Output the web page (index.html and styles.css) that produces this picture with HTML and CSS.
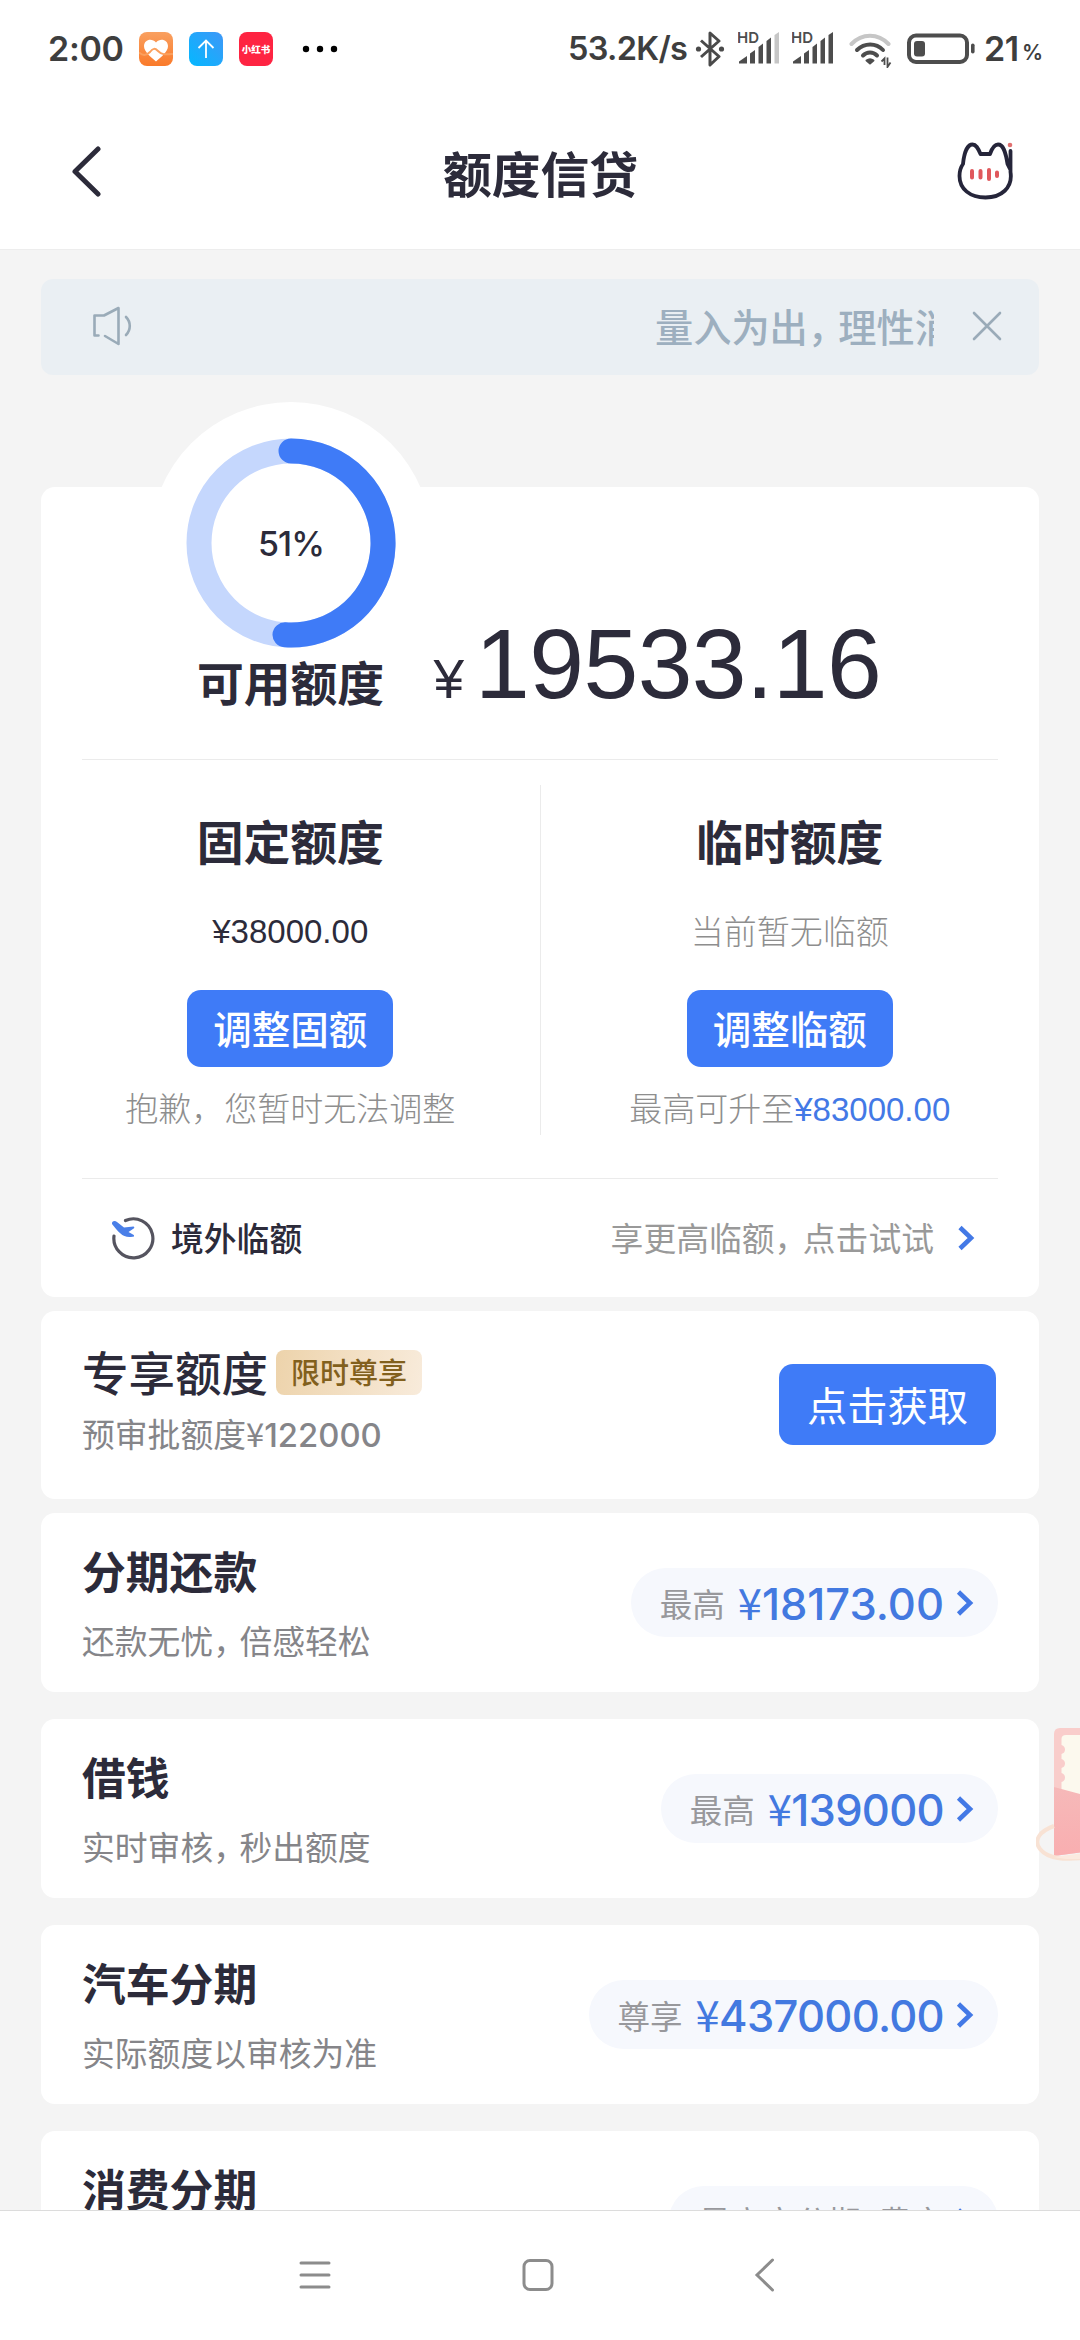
FILE: index.html
```html
<!DOCTYPE html>
<html lang="zh-CN">
<head>
<meta charset="utf-8">
<title>额度信贷</title>
<link rel="stylesheet" href="styles.css">
</head>
<body>
<div class="status">
  <span class="clock">2:00</span>
  <svg class="app" viewBox="0 0 34 34"><defs><linearGradient id="og" x1="0" y1="0" x2="0" y2="1"><stop offset="0" stop-color="#f9a060"/><stop offset="1" stop-color="#fa7a2a"/></linearGradient><linearGradient id="bg" x1="1" y1="0" x2="0" y2="1"><stop offset="0" stop-color="#3f97f7"/><stop offset="1" stop-color="#04b8ff"/></linearGradient></defs><rect width="34" height="34" rx="8" fill="url(#og)"/><path d="M17 29.500C12 25 5 20 5 14C5 7.500 13 5.500 17 10.500C21 5.500 29 7.500 29 14C29 20 22 25 17 29.500Z" fill="#fff"/><path d="M0 20.500C4 24 7 24 11 20C14 16 16 16 19 19C23 23 26 22.500 34 22" fill="none" stroke="#fba05e" stroke-width="2"/></svg>
  <svg class="app" viewBox="0 0 34 34"><rect width="34" height="34" rx="8" fill="url(#bg)"/><path d="M17 26V8.500M9.500 16L17 8.500L24.500 16" fill="none" stroke="#fff" stroke-width="1.800"/></svg>
  <span class="app app-red">小红书</span>
  <svg class="dots" width="36" height="8" viewBox="0 0 36 8"><circle cx="4" cy="4" r="3.200"/><circle cx="18" cy="4" r="3.200"/><circle cx="32" cy="4" r="3.200"/></svg>
  <span class="speed">53.2K/s</span>
  <svg class="bt" width="30" height="36" viewBox="0 0 30 36"><path d="M6 9.500L24 25.500L15 34V2L24 10L6 26" fill="none" stroke="#4a4a4a" stroke-width="3" stroke-linejoin="round"/><circle cx="3.500" cy="18" r="2.600" fill="#4a4a4a"/><circle cx="26.500" cy="18" r="2.600" fill="#4a4a4a"/></svg>
  <svg class="sig" width="42" height="36" viewBox="0 -2 42 36"><text x="-1" y="11" class="hd">HD</text><g fill="#4d4d4d"><path d="M1 31.500V29.500L9 24V31.500Z"/><path d="M12 31.500V21.500L17 18V31.500Z"/><path d="M20.500 31.500V15L25 11.500V31.500Z"/><path d="M28.500 31.500V9L33 5.500V31.500Z"/><path d="M36.500 31.500V3L41 0V31.500Z" fill="#c6c6c6"/></g></svg>
  <svg class="sig" width="42" height="36" viewBox="0 -2 42 36"><text x="-1" y="11" class="hd">HD</text><g fill="#4d4d4d"><path d="M1 31.500V29.500L9 24V31.500Z"/><path d="M12 31.500V21.500L17 18V31.500Z"/><path d="M20.500 31.500V15L25 11.500V31.500Z"/><path d="M28.500 31.500V9L33 5.500V31.500Z"/><path d="M36.500 31.500V3L41 0V31.500Z"/></g></svg>
  <svg class="wifi" width="44" height="36" viewBox="0 0 44 36"><g fill="none" stroke-width="4" stroke-linecap="round"><path d="M2.500 12C13 1 29 1 39.500 12" stroke="#c6c6c6"/><path d="M8 18C15.500 10.500 27 10.500 34 18" stroke="#4d4d4d"/><path d="M14 23.500C18 19.500 24 19.500 28 23.500" stroke="#4d4d4d"/></g><path d="M17.500 28.500C19.500 27 22.500 27 24.500 28.500L21 31.500Z" fill="#4d4d4d" stroke="#4d4d4d" stroke-width="2" stroke-linejoin="round"/><path d="M32.500 29.500L35.500 26.500V33M38.500 25.500V35L41.500 30.500" fill="none" stroke="#4d4d4d" stroke-width="1.800"/></svg>
  <svg class="batt" width="70" height="32" viewBox="0 0 70 32"><rect x="2" y="2.500" width="58" height="26.500" rx="7" fill="none" stroke="#4d4d4d" stroke-width="4"/><rect x="7" y="8" width="11" height="15.500" rx="3" fill="#4d4d4d"/><rect x="64" y="10.500" width="3.600" height="10" rx="1.800" fill="#4d4d4d"/></svg>
  <span class="level">21</span><span class="pct">%</span>
</div>

<header class="header">
  <svg class="back" width="30" height="52" viewBox="0 0 30 52"><path d="M26 4L3 26.500L26 49" fill="none" stroke="#2c2b3a" stroke-width="5" stroke-linecap="round" stroke-linejoin="round"/></svg>
  <h1>额度信贷</h1>
  <svg class="cat" width="58" height="60" viewBox="0 0 58 60"><path d="M54.500 10V31C57 47 45 56.500 29.500 56.500C14 56.500 3.500 48 3.500 35C3.500 29 4.500 26.500 7 23C8 13 11 3.500 16.500 3.500C20 3.500 22 7 24.500 13H34C36.500 6 38.500 3.500 42 3.500C47 3.500 49.500 10 51.500 23L54 28" fill="none" stroke="#25253a" stroke-width="3.800" stroke-linejoin="round" stroke-linecap="round"/><g stroke="#e0585c" stroke-width="4" stroke-linecap="round"><path d="M16 30V36.500M24.500 30V36.500M33 29V38M41 31.500V35"/></g><circle cx="54" cy="4" r="2.300" fill="#e07070"/></svg>
</header>

<main class="main">
  <div class="notice">
    <svg class="horn" width="42" height="42" viewBox="0 0 42 42"><path d="M7.500 30.500H3.500V10.500H13L27.500 3V39L14 31M35 12C40 17 40 25 35 30" fill="none" stroke="#9aabb8" stroke-width="2.600" stroke-linejoin="round" stroke-linecap="round"/></svg>
    <div class="ticker">量入为出<i class="c">，</i>理性消费</div>
    <svg class="close" width="30" height="30" viewBox="0 0 30 30"><path d="M2 2L28 28M28 2L2 28" stroke="#9aabb8" stroke-width="2.600" stroke-linecap="round"/></svg>
  </div>

  <section class="card quota">
    <div class="total">
      <div class="gauge">
        <svg width="282" height="282" viewBox="-141 -141 282 282"><circle r="141" fill="#fff"/><circle r="92" fill="none" stroke="#c5d7fd" stroke-width="25"/><path d="M0 -92A92 92 0 1 1 -6 91.800" fill="none" stroke="#3f7bf7" stroke-width="25" stroke-linecap="round"/><text class="ratio" y="12.500" text-anchor="middle">51%</text></svg>
        <h2>可用额度</h2>
      </div>
      <div class="amount"><small>¥</small><b>19533.16</b></div>
    </div>
    <hr>
    <div class="split">
      <div class="half">
        <h2>固定额度</h2>
        <p class="val">¥38000.00</p>
        <a class="btn">调整固额</a>
        <p class="hint">抱歉，您暂时无法调整</p>
      </div>
      <div class="half">
        <h2>临时额度</h2>
        <p class="hint val-none">当前暂无临额</p>
        <a class="btn">调整临额</a>
        <p class="hint">最高可升至<em>¥83000.00</em></p>
      </div>
    </div>
    <hr>
    <div class="abroad">
      <svg class="plane" width="46" height="46" viewBox="0 0 46 46"><path d="M15.500 5.500A19.500 19.500 0 1 1 4 21" fill="none" stroke="#55545f" stroke-width="3.200" stroke-linecap="round"/><path d="M2 9C1.500 6.500 4.500 5 7 7L14 12.500L23.500 11.500C24.800 12 24.500 13.200 23.300 13.700L18.500 17L23.800 20C24.500 21.200 23.700 22 22.500 21.800C13 23.500 9 17.500 2 9Z" fill="#4a7fe8"/></svg>
      <span class="name">境外临额</span>
      <span class="try">享更高临额<i class="c">，</i>点击试试</span>
      <svg class="chev" width="18" height="28" viewBox="0 0 18 28"><path d="M3 3.500L14 14L3 24.500" fill="none" stroke="#4379e6" stroke-width="4.600"/></svg>
    </div>
  </section>

  <section class="card exclusive">
    <div>
      <div class="line"><h2>专享额度</h2><span class="tag">限时尊享</span></div>
      <p class="sub">预审批额度<span class="yen">¥</span><span class="num">122000</span></p>
    </div>
    <a class="btn get">点击获取</a>
  </section>

  <section class="card item">
    <div><h3>分期还款</h3><p class="sub">还款无忧<i class="c">，</i>倍感轻松</p></div>
    <a class="pill">最高<b><span class="yen">¥</span>18173.00</b><svg class="chev" width="18" height="28" viewBox="0 0 18 28"><path d="M2.500 3L14 14L2.500 25" fill="none" stroke="#4379e6" stroke-width="4.600"/></svg></a>
  </section>
  <section class="card item">
    <div><h3>借钱</h3><p class="sub">实时审核<i class="c">，</i>秒出额度</p></div>
    <a class="pill tight">最高<b><span class="yen">¥</span>139000</b><svg class="chev" width="18" height="28" viewBox="0 0 18 28"><path d="M2.500 3L14 14L2.500 25" fill="none" stroke="#4379e6" stroke-width="4.600"/></svg></a>
  </section>
  <section class="card item">
    <div><h3>汽车分期</h3><p class="sub">实际额度以审核为准</p></div>
    <a class="pill tight">尊享<b><span class="yen">¥</span>437000.00</b><svg class="chev" width="18" height="28" viewBox="0 0 18 28"><path d="M2.500 3L14 14L2.500 25" fill="none" stroke="#4379e6" stroke-width="4.600"/></svg></a>
  </section>
  <section class="card item">
    <div><h3>消费分期</h3></div>
    <a class="pill">最高享分期0费率<svg class="chev" width="18" height="28" viewBox="0 0 18 28"><path d="M2.500 3L14 14L2.500 25" fill="none" stroke="#4379e6" stroke-width="4.600"/></svg></a>
  </section>
</main>

<nav class="nav">
  <svg width="34" height="36" viewBox="0 0 34 36"><path d="M3 6H31M3 18H31M3 30H31" stroke="#8c8c8c" stroke-width="3" stroke-linecap="round"/></svg>
  <svg width="34" height="36" viewBox="0 0 34 36"><rect x="3" y="3.500" width="28" height="29" rx="6" fill="none" stroke="#8c8c8c" stroke-width="3"/></svg>
  <svg width="34" height="36" viewBox="0 0 34 36"><path d="M28.500 3L13 18L28.500 33" fill="none" stroke="#8c8c8c" stroke-width="3" stroke-linecap="round"/></svg>
</nav>

<svg class="packet" width="44" height="140" viewBox="0 0 44 140"><defs><linearGradient id="pk" x1="0" y1="0" x2="0" y2="1"><stop offset="0" stop-color="#f6b9b9"/><stop offset="1" stop-color="#f9aeb0"/></linearGradient></defs><path d="M48 0H24Q18 0 18 6V128L48 124Z" fill="#f9cdcb"/><path d="M48 7H30Q25.500 7 25.500 11V17Q29 18 29 21.500T25.500 26V31Q29 32 29 35.500T25.500 40V45Q29 46 29 49.500T25.500 54V66H48Z" fill="#fcf9ee"/><path d="M18 59L48 67V124L18 128Z" fill="url(#pk)"/><path d="M18 98C4 103 -3 112 4 121C12 131 28 132 48 130" fill="none" stroke="#f8e2d4" stroke-width="4"/><path d="M18 129L48 125V131L30 131Z" fill="#fbeae0"/></svg>
</body>
</html>
```
FILE: styles.css
```css
* { box-sizing: border-box; margin: 0; padding: 0; }
html, body { width: 1080px; height: 2340px; overflow: hidden; }
body {
  position: relative;
  display: flex;
  flex-direction: column;
  background: #fff;
  color: #2c2b3a;
  font-family: "Noto Sans CJK SC", "Noto Sans", sans-serif;
}
svg { display: block; flex: none; }
i, em { font-style: normal; }
.c { letter-spacing: -0.2em; }

/* status bar */
.status {
  display: flex;
  align-items: center;
  height: 97px;
  padding-left: 48px;
  color: #3e3e3e;
  font: 600 34px/40px Inter, sans-serif;
  white-space: nowrap;
}
.clock { width: 91px; letter-spacing: -0.3px; }
.app { width: 34px; height: 34px; margin-right: 16px; }
.app-red {
  border-radius: 8px;
  background: #fe2442;
  color: #fff;
  font: 900 9.500px/34px "Noto Sans CJK SC", sans-serif;
  text-align: center;
}
.dots { margin-left: 13px; }
.speed { margin-left: 230px; width: 125px; font-size: 32.500px; letter-spacing: -0.7px; }
.bt { margin-left: 2px; }
.sig { margin: -2px 0 0 12px; }
.bt + .sig { margin-left: 13px; }
.hd { font: 600 15px Inter, sans-serif; fill: #4d4d4d; }
.wifi { margin: 3px 0 0 15px; }
.batt { margin-left: 14px; }
.level { margin-left: 7px; width: 38px; font-size: 34px; letter-spacing: -0.5px; }
.pct { font-size: 21px; padding-top: 9px; }

/* header */
.header {
  display: flex;
  align-items: center;
  justify-content: space-between;
  height: 152px;
  padding: 0 66px 0 72px;
}
.header h1 { font-size: 48.800px; font-weight: 700; line-height: 60px; margin: -3px -23px 0 0; }
.back, .cat { margin-top: -5px; }

/* content */
.main {
  flex: 1;
  min-height: 0;
  overflow: hidden;
  padding: 29px 41px 0;
  background: #f4f4f4;
  border-top: 1px solid #ededed;
}
.notice {
  display: flex;
  align-items: center;
  height: 96px;
  padding: 0 36px 2px 50px;
  border-radius: 12px;
  background: #eaeff3;
}
.ticker {
  width: 279px;
  margin-left: 522px;
  overflow: hidden;
  color: #9dafbf;
  font-size: 38.200px;
  font-weight: 500;
  line-height: 56px;
  white-space: nowrap;
}
.close { margin-left: 38px; }
.card { border-radius: 14px; background: #fff; }

.quota { height: 810px; margin-top: 112px; }
.total {
  display: flex;
  height: 272px;
  margin: 0 41px;
  padding-left: 67.500px;
}
.gauge { width: 282px; margin-top: -85.500px; }
.ratio { font: 500 34px Inter, sans-serif; fill: #2c2b3a; letter-spacing: -1px; }
h2 { font-size: 46.800px; font-weight: 700; line-height: 60px; text-align: center; }
.gauge h2 { margin-top: -33px; }
.amount {
  display: flex;
  align-items: baseline;
  height: 100px;
  margin: 127px 0 0 2px;
  font-family: "Liberation Sans", sans-serif;
  line-height: 100px;
}
.amount small { font-size: 55px; }
.amount b { margin-left: 11px; font-size: 98.500px; font-weight: 400; letter-spacing: -0.6px; }

hr { height: 1px; margin: 0 41px; border: 0; background: #ebebeb; }
.split {
  display: flex;
  height: 418px;
  padding: 25px 0 43px;
}
.half { flex: 1; display: flex; flex-direction: column; align-items: center; white-space: nowrap; }
.half + .half { border-left: 1px solid #ebebeb; }
.half h2 { margin-top: 25px; }
.half p { height: 44px; line-height: 44px; }
.half .btn { margin: 36px 0 18px; }
.half .val, .half .val-none { margin-top: 40px; }
.val { font-family: "Liberation Sans", sans-serif; font-size: 33px; }
.hint { color: #8e8e8e; font-size: 33px; font-weight: 300; }
.hint em { font-family: "Liberation Sans", sans-serif; color: #4379e6; }
.half .val-none { line-height: 41px; }
.btn {
  width: 206px;
  height: 77px;
  border-radius: 14px;
  background: #3f7bf7;
  color: #fff;
  font-size: 38.500px;
  font-weight: 500;
  line-height: 75px;
  text-align: center;
}
.abroad { display: flex; align-items: center; height: 118px; padding: 0 64px 0 69px; font-size: 32.800px; line-height: 44px; }
.name { margin: -2px 0 0 15px; font-weight: 500; }
.try { margin: -2px 0 0 auto; color: #999; font-weight: 400; }
.abroad .c { letter-spacing: -0.14em; }
.abroad .chev { margin-left: 23px; }

.exclusive {
  display: flex;
  justify-content: space-between;
  height: 188px;
  margin-top: 14px;
  padding: 29px 43px 0 41px;
}
.line { display: flex; align-items: center; height: 62px; }
.line h2 { font-size: 46.500px; font-weight: 500; }
.tag {
  width: 146px;
  height: 45px;
  margin: 2px 0 0 8px;
  border-radius: 8px;
  background: linear-gradient(100deg, #edd3ab, #f8ebdb);
  color: #82601d;
  font-size: 29px;
  font-weight: 500;
  line-height: 42px;
  text-align: center;
}
.sub { color: #858589; font-size: 32.800px; line-height: 44px; white-space: nowrap; }
.exclusive .sub { margin-top: 9px; }
.num { font-family: Inter, sans-serif; font-weight: 500; }
.get { width: 217px; height: 81px; margin-top: 24px; font-size: 40.300px; font-weight: 400; line-height: 80px; }

.item {
  display: flex;
  justify-content: space-between;
  height: 179px;
  margin-top: 27px;
  padding: 29px 41px 0;
}
.exclusive + .item { margin-top: 14px; }
h3 { font-size: 43.800px; font-weight: 700; line-height: 56px; }
.item .sub { margin-top: 20px; }
.pill {
  display: flex;
  align-items: center;
  height: 69px;
  margin-top: 26px;
  padding: 0 24px 0 29px;
  border-radius: 35px;
  background: #f6f8fd;
  color: #98989c;
  font-size: 32.500px;
  line-height: 65px;
  white-space: nowrap;
}
.pill b {
  margin-left: 13px;
  color: #4379e0;
  font: 500 43.500px/69px Inter, sans-serif;
}
.tight b { letter-spacing: -0.7px; }
.yen { font-family: "Noto Sans CJK SC", sans-serif; font-weight: 400; }
.pill .chev { margin-left: 12px; }

/* system navigation */
.nav {
  display: flex;
  justify-content: center;
  gap: 189px;
  height: 130px;
  padding: 46px 5px 0 0;
  border-top: 1px solid #dcdcdc;
  background: #fff;
}

/* floating promotion at the screen edge */
.packet { position: absolute; top: 1728px; right: 0; }
```
